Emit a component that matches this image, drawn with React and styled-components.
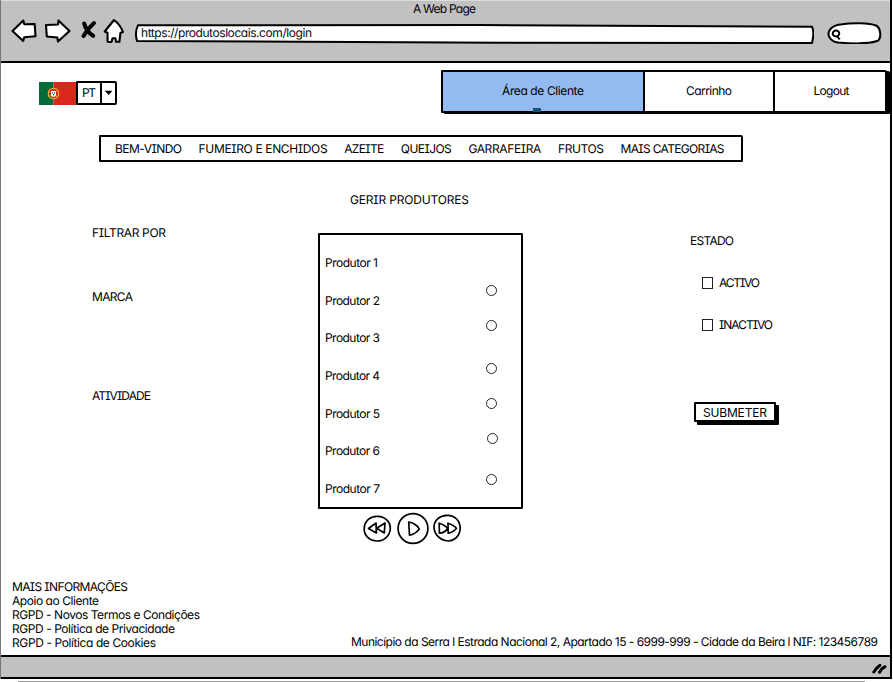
import React, { useLayoutEffect, useRef } from "react";
import styled, { createGlobalStyle } from "styled-components";

const GlobalStyle = createGlobalStyle`
  * { box-sizing: border-box; }
  body {
    margin: 0;
    background: #fff;
    color: #000;
    font-family: Inter, "Liberation Sans", sans-serif;
    font-size: 12px;
    line-height: 14px;
    font-feature-settings: "cv11", "cv08";
    text-rendering: geometricPrecision;
  }
  button, ul { font: inherit; color: inherit; margin: 0; padding: 0; }
`;

const FittedText = styled.span`
  display: block;
  flex: none;
  width: ${(p) => p.$width}px;
  white-space: nowrap;
`;

/* Label whose tracking is adjusted so that the text fills a given width. */
function Label({ width, children }) {
  const ref = useRef(null);
  useLayoutEffect(() => {
    const el = ref.current;
    el.style.letterSpacing = "0px";
    const range = document.createRange();
    range.selectNodeContents(el);
    const natural = range.getBoundingClientRect().width;
    el.style.letterSpacing = `${(width - natural) / (el.textContent.length - 1)}px`;
  }, [width, children]);
  return <FittedText ref={ref} $width={width}>{children}</FittedText>;
}

const Window = styled.div`
  width: 893px;
  height: 682px;
  overflow: hidden;
  display: flex;
  flex-direction: column;
`;

const Frame = styled.div`
  width: 892px;
  height: 679px;
  display: flex;
  flex-direction: column;
  border-left: 1px solid #777;
  border-right: 2px solid #000;
`;

const Chrome = styled.header`
  height: 63px;
  flex: none;
  background: #c1c1c1;
  border-top: 1px solid #dcdcdc;
  border-bottom: 2px solid #000;
`;

const WindowTitle = styled.div`
  height: 17px;
  padding: 1px 0 0 412px;
`;

const Toolbar = styled.div`
  height: 30px;
  display: flex;
  align-items: flex-start;
  padding-left: 10px;
`;

const NavIcons = styled.svg`
  display: block;
  flex: none;
  width: 114px;
  height: 30px;
`;

const Field = styled.div`
  position: relative;
  flex: none;
  width: ${(p) => p.$width}px;
  height: 26px;
  margin-left: ${(p) => p.$gap}px;
  padding: 8px 0 0 7px;
`;

const Outline = styled.svg`
  position: absolute;
  inset: 0;
  width: 100%;
  height: 100%;
`;

const FieldText = styled.div`
  position: relative;
  color: #080820;
`;

const Page = styled.main`
  flex: 1;
  display: flex;
  flex-direction: column;
`;

const TopRow = styled.div`
  display: flex;
  justify-content: space-between;
  height: 72px;
  padding: 7px 3px 0 38px;
`;

const Language = styled.div`
  display: flex;
  height: 25px;
  margin-top: 11px;
`;

const Flag = styled.svg`
  display: block;
  width: 37px;
  height: 23px;
  margin-top: 1px;
`;

const Select = styled.div`
  display: flex;
  width: 41px;
  height: 24px;
  border: 2px solid #000;
  border-radius: 1px 2px 2px 1px;
  background: #fff;
`;

const SelectValue = styled.div`
  width: 22px;
  padding: 3px 0 0 4px;
`;

const SelectArrow = styled.div`
  flex: 1;
  border-left: 2px solid #000;
  display: grid;
  place-items: center;
`;

const Tabs = styled.nav`
  display: grid;
  grid-template-columns: 200px 130px 1fr;
  width: 446px;
  height: 43px;
  border: 2px solid #000;
  border-radius: 1px 2px 1px 1px;
  box-shadow: 3px 1px 0 #000;
`;

const Tab = styled.div`
  position: relative;
  display: flex;
  justify-content: center;
  padding-top: 12px;
  background: ${(p) => (p.$active ? "#94baf2" : "#fff")};
  & + & { border-left: 2px solid #000; }
  &:last-child { padding-left: 3px; }
`;

const TabMarker = styled.i`
  position: absolute;
  left: 90px;
  bottom: -1px;
  width: 8px;
  height: 4px;
  background: #17547d;
`;

const Categories = styled.nav`
  display: flex;
  align-items: center;
  gap: 16.6px;
  width: 644px;
  height: 27px;
  margin-left: 98px;
  padding-left: 14px;
  border: 2px solid #000;
  border-radius: 1px 2px 1px 1px;
`;

const Heading = styled.h1`
  margin: 0;
  height: 71px;
  padding: 31px 0 0 349px;
  font: inherit;
`;

const Columns = styled.div`
  display: grid;
  grid-template-columns: 317px 372px 1fr;
  height: 312px;
`;

const Filters = styled.aside`
  padding-left: 91px;
`;

const Spaced = styled.div`
  margin-top: ${(p) => p.$gap}px;
`;

const Producers = styled.section`
  width: 205px;
`;

const ProducerBox = styled.div`
  display: flex;
  justify-content: space-between;
  height: 276px;
  padding: 21px 23px 0 5px;
  border: 2px solid #000;
  border-radius: 1px;
`;

const Names = styled.ul`
  display: grid;
  grid-auto-rows: 37.67px;
  list-style: none;
`;

const RadioColumn = styled.div`
  width: 12px;
  padding-top: 29px;
`;

const Radio = styled.span`
  display: block;
  width: 11px;
  height: 11px;
  margin-left: ${(p) => p.$shift || 0}px;
  margin-bottom: ${(p) => p.$gap}px;
  border: 1px solid #222;
  border-radius: 50%;
`;

const Player = styled.svg`
  display: block;
  width: 100px;
  height: 34px;
  margin: 2px 0 0 44px;
`;

const Status = styled.section`
  padding-top: 1px;
`;

const CheckRow = styled.div`
  display: flex;
  align-items: center;
  gap: 6px;
  height: 14px;
  margin-top: ${(p) => p.$gap}px;
  padding-left: 12px;
`;

const Checkbox = styled.span`
  width: 11px;
  height: 12px;
  border: 1px solid #222;
`;

const Submit = styled.button`
  display: block;
  width: 82px;
  height: 20px;
  margin: 70px 0 0 4px;
  padding: 1px 0 0 7px;
  text-align: left;
  background: #fff;
  border: 2px solid #000;
  border-radius: 1px;
  box-shadow: 3px 3px 0 #000;
`;

const Footer = styled.footer`
  display: flex;
  justify-content: space-between;
  align-items: flex-end;
  margin-top: auto;
  padding: 0 12px 5px 11px;
`;

const Address = styled.div`
  padding-bottom: 1px;
`;

const StatusBar = styled.div`
  display: flex;
  justify-content: flex-end;
  height: 24px;
  flex: none;
  background: #c1c1c1;
  border-top: 2px solid #000;
  border-bottom: 2px solid #000;
`;

const Shade = styled.div`
  width: 847px;
  height: 1px;
  margin: 2px 0 0 18px;
  background: #999;
`;

const categories = [
  ["BEM-VINDO", 67], ["FUMEIRO E ENCHIDOS", 129], ["AZEITE", 40], ["QUEIJOS", 51],
  ["GARRAFEIRA", 73], ["FRUTOS", 46], ["MAIS CATEGORIAS", 104],
];
const producers = [1, 2, 3, 4, 5, 6, 7];
const radios = [[24], [32], [24], [24, 0], [30, 1], [0]];
const links = [
  ["MAIS INFORMAÇÕES", 116], ["Apoio ao Cliente", 87], ["RGPD - Novos Termos e Condições", 188],
  ["RGPD - Política de Privacidade", 163], ["RGPD - Política de Cookies", 144],
];

function BrowserIcons() {
  return (
    <NavIcons viewBox="11 17 114 30" fill="#fff" stroke="#000" strokeWidth="2.1" strokeLinejoin="round" strokeLinecap="round">
      <path d="M12.5 30 L23.3 19.5 L24.3 23.2 L34.7 23 L35.5 35.2 L24.2 36.2 L23.2 40 Z" />
      <path d="M46 24 L58 23.5 L58.5 19.5 L69.5 30 L58 40.5 L57.3 36.5 L46.8 35.5 Z" />
      <path d="M84.2 22.5 C85.5 28 89.5 32.5 93.2 34.8 M94 22 C89.5 26 86 30.5 83.5 35" fill="none" strokeWidth="4" />
      <path d="M114 19 L104.7 30.5 L107.5 31.7 L107.6 40.8 L111.5 41 L112.5 37.3 L115.5 37.3 L116 40.8 L119.4 40.8 L120.5 31.7 L123 31 C121 26 117.5 21.5 114 19 Z" />
    </NavIcons>
  );
}

function PortugalFlag() {
  return (
    <Flag viewBox="0 0 37 23">
      <path fill="#046a38" d="M0 0h14.5v23H0z" />
      <path fill="#da291c" d="M14.5 0H37v23H14.5z" />
      <circle cx="14.5" cy="11.5" r="5.2" fill="none" stroke="#d9ac27" strokeWidth="1.3" />
      <path d="M9.5 9.5l9 5M9.5 14.5l9-6" stroke="#d9ac27" />
      <path d="M11.3 8h6.2v5c0 4-6.2 4-6.2 0z" fill="#d81d25" />
      <path d="M12 9h5v3.9c0 2.6-5 2.6-5 0z" fill="#fff" />
      <path d="M12.8 10.5h1.2v1.2h-1.2zM15 10.5h1.2v1.2H15zM13.9 12h1.2v1.2h-1.2z" fill="#35405b" />
    </Flag>
  );
}

function PlayerControls() {
  return (
    <Player viewBox="362 511 100 34" fill="#fff" stroke="#000" strokeWidth="1.7" strokeLinejoin="round">
      <path d="M377 516.3 C385 516 390.5 522 390.3 528.5 C390 536 384 541 377 541 C369 541 364 535 364.2 528.5 C364.5 521 370 516.5 377 516.3Z" />
      <path d="M376 523 L376.4 533 L368.5 528.5Z M385 523 L384.3 533 L376.7 528.3Z" />
      <circle cx="413" cy="528.5" r="14.9" />
      <path d="M408.7 522 C413 522.5 418 526 419.3 529 C417 532 413.5 534.5 409.5 535.2Z" />
      <path d="M447 515.3 C455 515 460.3 521 460.2 528.5 C460 536 454 541.3 448 541 C440 540.5 434 534 434 527 C434 520 440 515.5 447 515.3Z" />
      <path d="M439.2 523.2 C443 524.5 446 526 447.6 528.5 C446 531 443 533 439.4 533.2Z M448 523.2 C452 524.5 455 526 456.5 528.5 C454 531 451 533 448.2 533.2Z" />
    </Player>
  );
}

export default function App() {
  return (
    <Window>
      <GlobalStyle />
      <Frame>
        <Chrome>
          <WindowTitle><Label width={63}>A Web Page</Label></WindowTitle>
          <Toolbar>
            <BrowserIcons />
            <Field $width={680} $gap={9}>
              <Outline viewBox="134 18 680 26" fill="#fff" stroke="#000" strokeWidth="2" strokeLinejoin="round">
                <path d="M138 25.3 L480 25 L812 26.7 C814 31 813.5 37 812 43 L500 42.7 L137 41 C135.3 35 135.6 30 138 25.3Z" />
              </Outline>
              <FieldText><Label width={171}>https://produtoslocais.com/login</Label></FieldText>
            </Field>
            <Field $width={55} $gap={13}>
              <Outline viewBox="827 18 55 26" fill="#fff" stroke="#000" strokeWidth="2">
                <path d="M842 24.2 C853 22.6 869 23 876 25.5 C881 28 881.5 38 878 40.8 C869 44 850 43.5 838 42.5 C829 41 825.5 33 831.5 28 C834 25.5 837 24.8 842 24.2Z" />
                <ellipse cx="836" cy="33.5" rx="3.3" ry="3" />
                <path d="M837 36 L839.7 39.5" />
              </Outline>
            </Field>
          </Toolbar>
        </Chrome>
        <Page>
          <TopRow>
            <Language>
              <PortugalFlag />
              <Select>
                <SelectValue><Label width={14}>PT</Label></SelectValue>
                <SelectArrow>
                  <svg width="9" height="6" viewBox="0 0 9 6"><path d="M.5.7h8L4.7 5z" /></svg>
                </SelectArrow>
              </Select>
            </Language>
            <Tabs>
              <Tab $active><Label width={82}>Área de Cliente</Label><TabMarker /></Tab>
              <Tab><Label width={46}>Carrinho</Label></Tab>
              <Tab><Label width={36}>Logout</Label></Tab>
            </Tabs>
          </TopRow>
          <Categories>
            {categories.map(([name, width]) => <Label key={name} width={width}>{name}</Label>)}
          </Categories>
          <Heading><Label width={119}>GERIR PRODUTORES</Label></Heading>
          <Columns>
            <Filters>
              <Spaced $gap={-7}><Label width={74}>FILTRAR POR</Label></Spaced>
              <Spaced $gap={50}><Label width={41}>MARCA</Label></Spaced>
              <Spaced $gap={85}><Label width={59}>ATIVIDADE</Label></Spaced>
            </Filters>
            <Producers>
              <ProducerBox>
                <Names>
                  {producers.map((n) => (
                    <li key={n}><Label width={n === 1 ? 53 : 55}>{`Produtor ${n}`}</Label></li>
                  ))}
                </Names>
                <RadioColumn>
                  {radios.map(([gap, shift], i) => <Radio key={i} $gap={gap} $shift={shift} />)}
                </RadioColumn>
              </ProducerBox>
              <PlayerControls />
            </Producers>
            <Status>
              <Label width={44}>ESTADO</Label>
              <CheckRow $gap={28}><Checkbox /><Label width={41}>ACTIVO</Label></CheckRow>
              <CheckRow $gap={28}><Checkbox /><Label width={54}>INACTIVO</Label></CheckRow>
              <Submit><Label width={64}>SUBMETER</Label></Submit>
            </Status>
          </Columns>
          <Footer>
            <div>
              {links.map(([text, width]) => <Label key={text} width={width}>{text}</Label>)}
            </div>
            <Address>
              <Label width={527}>Município da Serra l Estrada Nacional 2, Apartado 15 - 6999-999 - Cidade da Beira l NIF: 123456789</Label>
            </Address>
          </Footer>
        </Page>
        <StatusBar>
          <svg width="19" height="20" viewBox="872 657 19 20" fill="none" stroke="#000" strokeWidth="3" strokeLinecap="round">
            <path d="M874.8 672 C876.5 669 878.5 667 881 665.3 M880.5 672.2 C881.7 670 883.5 668 886 666.7" />
          </svg>
        </StatusBar>
      </Frame>
      <Shade />
    </Window>
  );
}
